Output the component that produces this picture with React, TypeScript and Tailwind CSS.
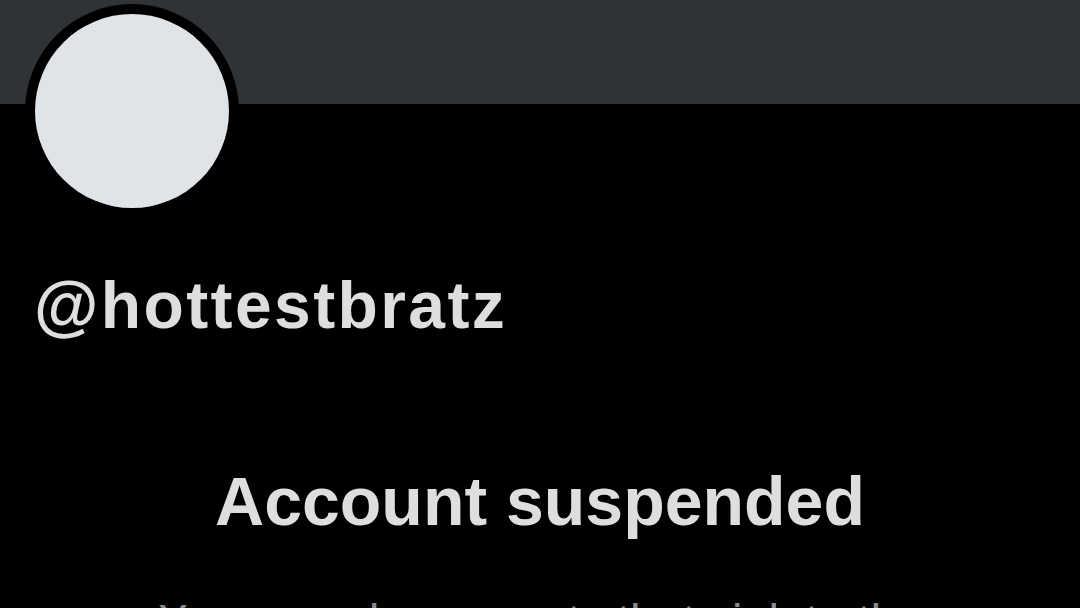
export default function App() {
  const font = { fontFamily: '"Liberation Sans", Arial, sans-serif' };
  return (
    <div className="w-[1080px] h-[608px] bg-black overflow-hidden" style={font}>
      <div className="h-[104px] bg-[#2f3336]" />
      <div className="ml-[25px] mt-[-100px] w-[214px] h-[214px] rounded-full bg-black p-[10px]">
        <div className="w-full h-full rounded-full bg-[#dfe4e8]" />
      </div>
      <div className="mt-[47px] ml-[34px] text-[66px] leading-[80px] font-bold text-[#dedede] tracking-[2.4px]">
        @hottestbratz
      </div>
      <div className="mt-[116px] text-center text-[68px] leading-[80px] font-bold text-[#dedede]">
        Account suspended
      </div>
      <div className="mt-[50px] mx-auto w-[800px] text-center text-[47px] leading-[60px] text-[#8b8b8b]">
        X suspends accounts that violate the X Rules.
      </div>
    </div>
  );
}
